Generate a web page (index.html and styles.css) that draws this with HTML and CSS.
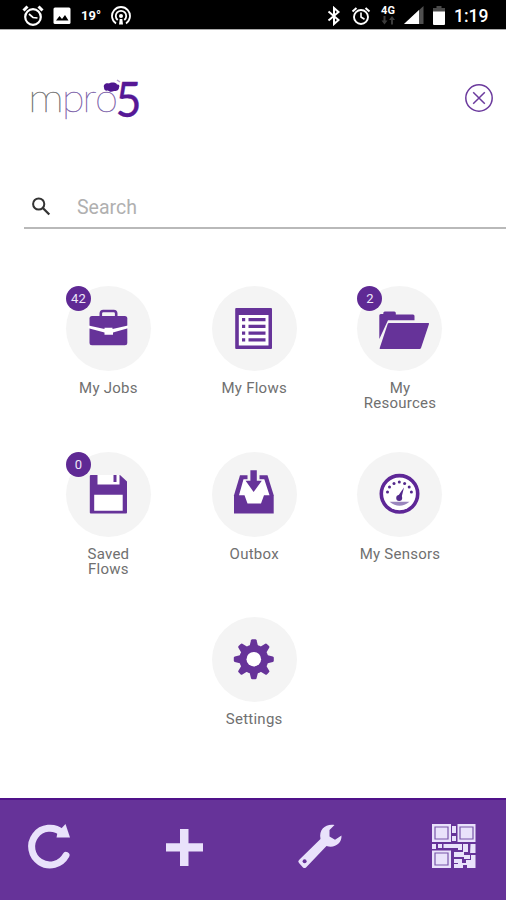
FILE: index.html
```html
<!DOCTYPE html>
<html lang="en">
<head>
<meta charset="utf-8">
<title>mpro5</title>
<link rel="stylesheet" href="styles.css">
</head>
<body>
<div class="screen">
  <div class="status">
    <svg class="st-alarm" width="24" height="24" viewBox="0 0 24 24" fill="none" stroke="#fff"><circle cx="12" cy="13" r="7.8" stroke-width="2.2"/><path d="M2.500 6.500l4-4M21.500 6.500l-4-4" stroke-width="3"/><path d="M8 10l4 3.500 4.500.5" stroke-width="1.700"/></svg>
    <svg class="st-image" width="18" height="18" viewBox="0 0 18 18"><rect x=".5" y=".5" width="17" height="16.500" rx="1.500" fill="#fff"/><path d="M3 13.500l3.500-4.500 2.500 3 3-4 3.500 5.500z" fill="#000"/></svg>
    <span class="st-temp">19°</span>
    <svg class="st-cast" width="20" height="20" viewBox="0 0 20 20" fill="none" stroke="#fff" stroke-width="1.800"><path d="M5 17.500a9 9 0 1 1 10 0M6.700 14a5.200 5.200 0 1 1 6.600 0"/><circle cx="10" cy="10" r="2" fill="#fff" stroke="none"/><path d="M8 18.500l.7-5.500h2.600l.7 5.500z" fill="#fff" stroke="none"/></svg>
    <span class="st-space"></span>
    <svg class="st-bt" width="14" height="20" viewBox="0 0 14 20" fill="none" stroke="#fff" stroke-width="2"><path d="M1.500 5.500l10 8.500L7 18V2l4.500 4L1.500 14.500"/></svg>
    <svg class="st-alarm2" width="20" height="20" viewBox="0 0 20 20" fill="none" stroke="#fff"><circle cx="10" cy="11" r="7" stroke-width="1.900"/><path d="M1.500 5.500l4-3.500M18.500 5.500l-4-3.500" stroke-width="2"/><path d="M10 6.500V11l3.500 2.200" stroke-width="1.600"/></svg>
    <div class="net"><span>4G</span><svg width="16" height="9" viewBox="0 0 16 9" fill="#3c3c3c"><path d="M3.500 0h2v4.500h2L4.500 8.500l-3-4h2zM11 8.500h2V4h2L12 0 9 4h2z"/></svg></div>
    <svg class="st-sig" width="20" height="19" viewBox="0 0 20 19"><path d="M0 18L19.500 0v18z" fill="#505050"/><path d="M0 18L15 4v14z" fill="#fff"/></svg>
    <svg class="st-bat" width="12" height="19" viewBox="0 0 12 19"><path d="M3.500 0h5v2H12v4H0V2h3.500z" fill="#4a4a4a"/><path d="M0 5.500h12V18a1 1 0 0 1-1 1H1a1 1 0 0 1-1-1z" fill="#fff"/></svg>
    <span class="st-time">1:19</span>
  </div>

  <header class="header">
    <svg class="logo" width="116" height="52" viewBox="0 0 116 52">
      <text class="logo-m" x="-1" y="38.500" textLength="36" lengthAdjust="spacingAndGlyphs">m</text>
      <text class="logo-p" x="33" y="38.500" textLength="22.500" lengthAdjust="spacingAndGlyphs">p</text>
      <text class="logo-p" x="53.500" y="38.500" textLength="14" lengthAdjust="spacingAndGlyphs">r</text>
      <text class="logo-p" x="66" y="38.500" textLength="23" lengthAdjust="spacingAndGlyphs">o</text>
      <path d="M75 14.500c-1-3 2-5 5-4 2-1.500 7-1.500 8 1 2-.5 3 1 2 3 0 3-3 3.500-5 3.500-3 1.500-5 .5-6-.5-2 .5-4 0-4-3z" fill="#4f168f"/>
      <path d="M88 7l3 2" stroke="#b69fd0" stroke-width="1.500"/>
      <text class="logo-5" x="86.500" y="44" textLength="26" lengthAdjust="spacingAndGlyphs">5</text>
    </svg>
    <svg class="close" width="30" height="30" viewBox="0 0 30 30" fill="none" stroke="#6b3a9d"><circle cx="15" cy="15" r="13.200" stroke-width="1.500"/><path d="M9.200 9.200l11.600 11.600M20.800 9.200L9.200 20.800" stroke-width="1.500"/></svg>
  </header>

  <div class="search">
    <svg width="22" height="22" viewBox="0 0 22 22" fill="none" stroke="#333"><circle cx="7.700" cy="8" r="5.600" stroke-width="2"/><path d="M11.800 12l6.500 6.500" stroke-width="2.300"/></svg>
    <span>Search</span>
  </div>

  <main class="grid">
    <div class="tile">
      <div class="disc"><span class="badge">42</span>
        <svg viewBox="0 0 85 85"><path d="M34.800 31v-3.500q0-2.500 2.500-2.500h10.400q2.500 0 2.500 2.500V31" fill="none" stroke="#663399" stroke-width="2.600"/><rect x="23.500" y="30" width="37.800" height="29.300" rx="2.500" fill="#663399"/><path d="M22.500 39.500L38.500 43v-1.200h8V43l15.500-3.500v2.700L47 46.500v2.300h-8.500v-2.300l-16-4.300z" fill="#fff"/></svg>
      </div><span class="label">My Jobs</span>
    </div>
    <div class="tile">
      <div class="disc">
        <svg viewBox="0 0 85 85"><rect x="23.200" y="22" width="36.800" height="41" rx="1" fill="#663399"/><path d="M26.800 29h29.700v30.500H26.800z" fill="#fff"/><path d="M30 32h3.200v3.200H30zM30 38.800h3.200V42H30zM30 45.500h3.200v3.200H30zM30 52.300h3.200v3.200H30zM36.500 32h17v3.200h-17zM36.500 38.800h17V42h-17zM36.500 45.500h17v3.200h-17zM36.500 52.300h17v3.200h-17z" fill="#663399"/></svg>
      </div><span class="label">My Flows</span>
    </div>
    <div class="tile">
      <div class="disc"><span class="badge">2</span>
        <svg viewBox="0 0 85 85"><path d="M22.300 53V29.500q0-1.500 1.500-1.500h2.500v-1q0-1.500 1.500-1.500h9.500q1.500 0 1.500 1.500v1.500H56q1.500 0 1.500 1.500v4.200H31z" fill="#663399"/><path d="M32 37h39.300q1 0 .7 1l-8 24q-.4 1-1.400 1H23.300q-1 0-.6-1l8-24q.3-1 1.300-1z" fill="#663399"/></svg>
      </div><span class="label">My<br>Resources</span>
    </div>
    <div class="tile">
      <div class="disc"><span class="badge">0</span>
        <svg viewBox="0 0 85 85"><path d="M24.800 23H54l7 6.500v31q0 1-1 1H24.800q-1 0-1-1V24q0-1 1-1z" fill="#663399"/><path d="M31.500 23h22v9.500h-22zM28.200 42.700h28.500v16H28.200z" fill="#fff"/><path d="M47.500 23h3v7h-3z" fill="#663399"/></svg>
      </div><span class="label">Saved<br>Flows</span>
    </div>
    <div class="tile">
      <div class="disc">
        <svg viewBox="0 0 85 85"><path d="M28 23.300h27.500l6.200 20v18.300H22V43.300z" fill="#663399"/><path d="M31.500 27.300h20.800l5.200 16H52l-3 8.200H35.500l-3-8.200H27z" fill="#fff"/><path d="M35.500 22h12v7h-12z" fill="#f3f3f3"/><path d="M38.400 18.300h6.400v10.500h5L41.600 40l-8-11.200h4.800z" fill="#663399"/></svg>
      </div><span class="label">Outbox</span>
    </div>
    <div class="tile">
      <div class="disc">
        <svg viewBox="0 0 85 85"><circle cx="42.500" cy="41.800" r="18.200" fill="#fff" stroke="#5e2797" stroke-width="3.600"/><g fill="#53298c"><circle cx="30.500" cy="40" r="1.500"/><circle cx="32.500" cy="35" r="1.500"/><circle cx="37" cy="31.500" r="1.500"/><circle cx="42.300" cy="30" r="1.500"/><circle cx="47.600" cy="31.500" r="1.500"/><circle cx="52.200" cy="35" r="1.500"/><circle cx="54.400" cy="40" r="1.500"/><circle cx="42.200" cy="46" r="3"/><path d="M41 44l6-8.500-2.500 10z"/></g><path d="M32.500 49.800h20q-10 8-20 0z" fill="#9a86bd"/></svg>
      </div><span class="label">My Sensors</span>
    </div>
    <div class="tile tile-mid">
      <div class="disc">
        <svg viewBox="0 0 85 85"><g transform="translate(41.800 42.200)" fill="#663399"><path id="tooth" d="M-4.500-12L-2.800-19q.3-1 1.300-1h3q1 0 1.300 1L4.500-12V12L2.800 19q-.3 1-1.300 1h-3q-1 0-1.300-1L-4.500 12z"/><use href="#tooth" transform="rotate(45)"/><use href="#tooth" transform="rotate(90)"/><use href="#tooth" transform="rotate(135)"/><circle r="14.500"/><circle r="7.300" fill="#fff"/></g></svg>
      </div><span class="label">Settings</span>
    </div>
  </main>

  <footer class="toolbar">
    <svg viewBox="0 0 48 48"><path d="M40 32.300A18.300 18.300 0 1 1 36 9.800" fill="none" stroke="#e9e2fb" stroke-width="7" stroke-linecap="round"/><path d="M39.500 1l4.500 13.500H30.500l1-5z" fill="#e9e2fb"/></svg>
    <svg viewBox="0 0 48 48"><path d="M19 6h8.500v14.300H42v8.200H27.500V43H19V28.500H5v-8.200h14z" fill="#e9e2fb"/></svg>
    <svg viewBox="0 0 48 48"><path d="M38.500 2C30 .5 22.500 6 24.500 16L3 37q-1.500 1.500 0 3l4 4.500q1.500 1.200 3 0L30.500 23c8 2.500 15.500-2.500 15-10.500l-6.500 4.200-5.500-3.200V7z" fill="#e9e2fb"/><circle cx="8.600" cy="38.300" r="2" fill="#663399"/></svg>
    <svg viewBox="0 0 48 48"><path d="M1 1h19v18H1zM26.500 1h18v18h-18zM1 27.500h19V45H1zM21 3h4v7h-4zM21 13h4v5h-4zM1 21h4v5H1zM7 21h4v4H7zM12.500 21H31v6h-4v-2H12.500zM32 21h5v8h-4v5H23v-5h9zM39.500 21h5v9H39v6H33v-4h6zM40 32h4.500v13H36v-3h-4v3h-9v-4h4v-1h-4v-4h8v4h4v-3h5z" fill="#e9e2fb"/><path d="M4 4h13v12H4zM29 4h13v12H29zM4 30h13v12H4z" fill="none" stroke="#7955aa" stroke-width="1.200"/></svg>
  </footer>
</div>
</body>
</html>
```

FILE: styles.css
```css
* { box-sizing: border-box; }

body {
  margin: 0;
  background: #fff;
  font-family: Roboto, "Liberation Sans", sans-serif;
}

.screen {
  display: flex;
  flex-direction: column;
  width: 506px;
  height: 900px;
  overflow: hidden;
}

svg { display: block; flex: none; }

.status {
  display: flex;
  align-items: center;
  height: 30px;
  padding: 2px 18px 0 21px;
  background: #000;
  border-bottom: 1px solid #aaa;
  color: #fff;
}

.st-image { margin-left: 8px; }
.st-temp { margin-left: 10px; width: 21px; font-size: 13px; font-weight: 700; white-space: nowrap; }
.st-cast { margin-left: 9px; }
.st-space { flex: 1; }
.st-bt { margin-right: 2px; }
.st-alarm2 { margin-left: 8px; }

.net { display: flex; flex-direction: column; align-items: center; width: 18px; margin-left: 8px; font-size: 11px; line-height: 10px; font-weight: 700; }

.st-sig { margin-left: 7px; }
.st-bat { margin-left: 9px; }
.st-time { margin-left: 9px; width: 34px; font-size: 17.5px; font-weight: 500; white-space: nowrap; }

.header {
  display: flex;
  justify-content: space-between;
  height: 140px;
  padding: 43px 12px 0 29px;
}

.close { margin-top: 10px; }
.logo { overflow: visible; }
.logo-m, .logo-p { font-family: Lato, sans-serif; font-weight: 100; font-size: 40px; stroke-width: .4px; }
.logo-m { fill: #777; stroke: #777; }
.logo-p { fill: #8065ab; stroke: #8065ab; }
.logo-5 { font-family: Lato, sans-serif; font-weight: 400; font-size: 49px; fill: #561896; stroke: #561896; stroke-width: .3px; }

.search {
  display: flex;
  align-items: center;
  height: 59px;
  margin-left: 24px;
  padding: 17px 0 0 7px;
  border-bottom: 2px solid #b9b9b9;
}

.search span { margin-left: 24px; font-size: 19.5px; color: #b0b0b0; }

.grid {
  display: grid;
  grid-template-columns: repeat(3, 145.8px);
  grid-auto-rows: 165.5px;
  flex: 1;
  margin-left: 35.5px;
  padding-top: 57px;
}

.tile { display: flex; flex-direction: column; align-items: center; }
.tile-mid { grid-column: 2; }

.disc {
  position: relative;
  width: 85px;
  height: 85px;
  border-radius: 50%;
  background: #f4f4f4;
}

.badge {
  position: absolute;
  left: 0;
  top: 0;
  width: 25px;
  height: 25px;
  border-radius: 50%;
  background: #5f2994;
  color: #eee6f8;
  font-size: 13px;
  line-height: 25px;
  text-align: center;
}

.label {
  margin-top: 10px;
  font-size: 15px;
  line-height: 15px;
  letter-spacing: .25px;
  text-align: center;
  color: #707070;
}

.toolbar {
  display: flex;
  gap: 87px;
  height: 102px;
  padding: 23px 0 0 26px;
  background: #663399;
  border-top: 2px solid #50128a;
}

.toolbar svg { width: 48px; height: 48px; }
```
